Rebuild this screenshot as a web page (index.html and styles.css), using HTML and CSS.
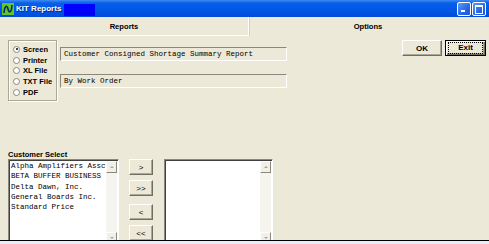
FILE: index.html
```html
<!DOCTYPE html>
<html lang="en">
<head>
  <meta charset="UTF-8" />
  <title>KIT Reports</title>
  <link rel="stylesheet" href="styles.css">
</head>
<body>
  <div class="window">
    <div class="titlebar">
      <svg class="app-icon" width="12" height="12" viewBox="0 0 12 12">
        <rect x="0" y="0" width="12" height="12" fill="#5fc72a" />
        <path d="M2 10 C2.5 3, 5 1.5, 6 6 S9.5 10, 10 2" fill="none" stroke="#0b2a6b" stroke-width="1.6" />
      </svg>
      <span class="title">KIT Reports</span>
      <span class="title-box"></span>
      <div class="win-btns">
        <span class="win-btn min"><i></i></span>
        <span class="win-btn max"><i></i></span>
      </div>
    </div>

    <div class="tabs">
      <div class="tab reports">Reports</div>
      <div class="tab options">Options</div>
    </div>

    <div class="panel">
      <div class="top-row">
        <div class="output-box">
          <label class="radio"><span class="dot checked"></span>Screen</label>
          <label class="radio"><span class="dot"></span>Printer</label>
          <label class="radio"><span class="dot"></span>XL File</label>
          <label class="radio"><span class="dot"></span>TXT File</label>
          <label class="radio"><span class="dot"></span>PDF</label>
        </div>

        <div class="fields">
          <div class="field">Customer Consigned Shortage Summary Report</div>
          <div class="field second">By Work Order</div>
        </div>

        <div class="actions">
          <button class="btn ok">OK</button>
          <button class="btn exit"><span>Exit</span></button>
        </div>
      </div>

      <div class="customer">
        <div class="section-label">Customer Select</div>
        <div class="picker">
          <div class="listbox left-list">
            <div class="items">
              <div>Alpha Amplifiers Assc</div>
              <div>BETA BUFFER BUSINESS</div>
              <div>Delta Dawn, Inc.</div>
              <div>General Boards Inc.</div>
              <div>Standard Price</div>
            </div>
            <div class="scrollbar">
              <span class="arrow up"></span>
              <span class="arrow down"></span>
            </div>
          </div>

          <div class="move-btns">
            <button class="btn move">&gt;</button>
            <button class="btn move gap-s">&gt;&gt;</button>
            <button class="btn move gap-l">&lt;</button>
            <button class="btn move gap-s">&lt;&lt;</button>
          </div>

          <div class="listbox right-list">
            <div class="items"></div>
            <div class="scrollbar">
              <span class="arrow up"></span>
              <span class="arrow down"></span>
            </div>
          </div>
        </div>
      </div>
    </div>
  </div>
  <div class="bottom-strip"></div>
</body>
</html>
```

FILE: styles.css
```css
body {
  margin: 0;
  width: 489px;
  height: 244px;
  overflow: hidden;
  background: #ece9d8;
  font-family: "Liberation Sans", Arial, sans-serif;
  font-size: 7.5px;
  color: #000;
}

.window {
  height: 240px;
  overflow: hidden;
  border-bottom: 1px solid #000;
  background: #ece9d8;
}

/* Title bar */
.titlebar {
  height: 17px;
  display: flex;
  align-items: center;
  background: linear-gradient(#3f8cf3 0, #0a5fe8 3px, #0058e6 55%, #004cd8 100%);
  color: #fff;
}

.app-icon {
  margin-left: 2px;
  margin-top: 1px;
}

.title {
  margin-left: 2px;
  font-size: 8px;
  font-weight: bold;
  text-shadow: 1px 1px 0 #0a2a80;
}

.title-box {
  width: 31px;
  height: 12px;
  margin-left: 3px;
  margin-top: 2px;
  background: #0202f8;
}

.win-btns {
  margin-left: auto;
  margin-right: 3px;
  display: flex;
  gap: 1px;
}

.win-btn {
  width: 12px;
  height: 12px;
  border: 1px solid #fff;
  border-radius: 2px;
  background: linear-gradient(135deg, #5d9cf8, #2766e8 60%, #1c55d8);
  position: relative;
}

.win-btn.min i {
  position: absolute;
  left: 3px;
  bottom: 3px;
  width: 4px;
  height: 2px;
  background: #fff;
}

.win-btn.max i {
  position: absolute;
  left: 2px;
  top: 2px;
  width: 6px;
  height: 6px;
  border: 1px solid #fff;
  border-top-width: 2px;
}

/* Tabs */
.tabs {
  display: flex;
  height: 19px;
}

.tab {
  display: flex;
  align-items: center;
  justify-content: center;
  font-weight: bold;
  font-size: 7.6px;
}

.tab.reports {
  width: 248px;
  border-right: 1px solid #fff;
  border-bottom: 1px solid #fff;
  box-shadow: 1px 0 0 #d4d0c0;
}

.tab.options {
  flex: 1;
  padding-right: 2px;
}

/* Top row */
.top-row {
  display: flex;
  align-items: flex-start;
  margin-top: 4px;
}

.output-box {
  margin-left: 8px;
  width: 47px;
  height: 56px;
  padding-top: 3px;
  border: 1px solid #aca899;
  box-shadow: 1px 1px 0 #fff, inset 1px 1px 0 #fff;
}

.radio {
  display: flex;
  align-items: center;
  height: 10.8px;
  font-weight: bold;
}

.dot {
  width: 5px;
  height: 5px;
  margin-left: 4px;
  margin-right: 3px;
  border: 1px solid #8a887c;
  border-radius: 50%;
  background: #fff;
  position: relative;
}

.dot.checked::after {
  content: "";
  position: absolute;
  left: 1.5px;
  top: 1.5px;
  width: 2px;
  height: 2px;
  border-radius: 50%;
  background: #000;
}

.fields {
  margin-left: 3px;
  padding-top: 7px;
  width: 227px;
}

.field {
  height: 12px;
  line-height: 12px;
  padding-left: 3px;
  border: 1px solid;
  border-color: #8a887c #fff #fff #8a887c;
  font-family: "Liberation Mono", "Courier New", monospace;
  font-size: 7.5px;
  white-space: nowrap;
}

.field.second {
  margin-top: 13px;
}

.actions {
  margin-left: auto;
  margin-right: 3px;
  display: flex;
}

/* Buttons */
.btn {
  box-sizing: border-box;
  padding: 0;
  height: 16px;
  background: #ece9d8;
  border: 1px solid;
  border-color: #fff #716f64 #716f64 #fff;
  box-shadow: inset -1px -1px 0 #aca899;
  font-family: "Liberation Sans", Arial, sans-serif;
  font-size: 8px;
  color: #000;
}

.btn.ok {
  width: 40px;
  font-weight: bold;
}

.btn.exit {
  width: 41px;
  margin-left: 3px;
  border: 1px solid #000;
  box-shadow: inset 1px 1px 0 #fff, inset -1px -1px 0 #716f64, inset -2px -2px 0 #aca899;
  display: flex;
  align-items: center;
  justify-content: center;
}

.btn.exit span {
  display: block;
  width: 33px;
  height: 10px;
  line-height: 10px;
  border: 1px dotted #000;
  font-weight: bold;
}

/* Customer select */
.section-label {
  margin-top: 49px;
  margin-left: 8px;
  height: 9px;
  line-height: 9px;
  font-weight: bold;
}

.picker {
  display: flex;
  align-items: flex-start;
}

.listbox {
  height: 84px;
  display: flex;
  background: #fff;
  border: 1px solid;
  border-color: #8a887c #fff #fff #8a887c;
  box-shadow: inset 1px 1px 0 #404040;
}

.left-list {
  margin-left: 8px;
  width: 109px;
}

.right-list {
  margin-left: 11px;
  width: 107px;
}

.items {
  flex: 1;
  padding-left: 2px;
  padding-top: 1px;
  font-family: "Liberation Mono", "Courier New", monospace;
  font-size: 7.5px;
  line-height: 10.33px;
  white-space: nowrap;
  overflow: hidden;
}

.scrollbar {
  width: 11px;
  margin: 1px 1px 0 0;
  background: #f5f4ef;
  display: flex;
  flex-direction: column;
  justify-content: space-between;
}

.arrow {
  box-sizing: border-box;
  height: 12px;
  border: 1px solid;
  border-color: #fff #8a887c #8a887c #fff;
  background: #f1efe6;
  position: relative;
}

.arrow::after {
  content: "";
  position: absolute;
  left: 2.5px;
  top: 4px;
  border-left: 2.5px solid transparent;
  border-right: 2.5px solid transparent;
}

.arrow.up::after {
  border-bottom: 2px solid #aca899;
}

.arrow.down::after {
  border-top: 2px solid #aca899;
}

.move-btns {
  margin-left: 10px;
  display: flex;
  flex-direction: column;
}

.btn.move {
  width: 24px;
  font-weight: normal;
}

.btn.move.gap-s {
  margin-top: 5px;
}

.btn.move.gap-l {
  margin-top: 8px;
}

.bottom-strip {
  height: 3px;
  background: #e8edf9;
}
```
